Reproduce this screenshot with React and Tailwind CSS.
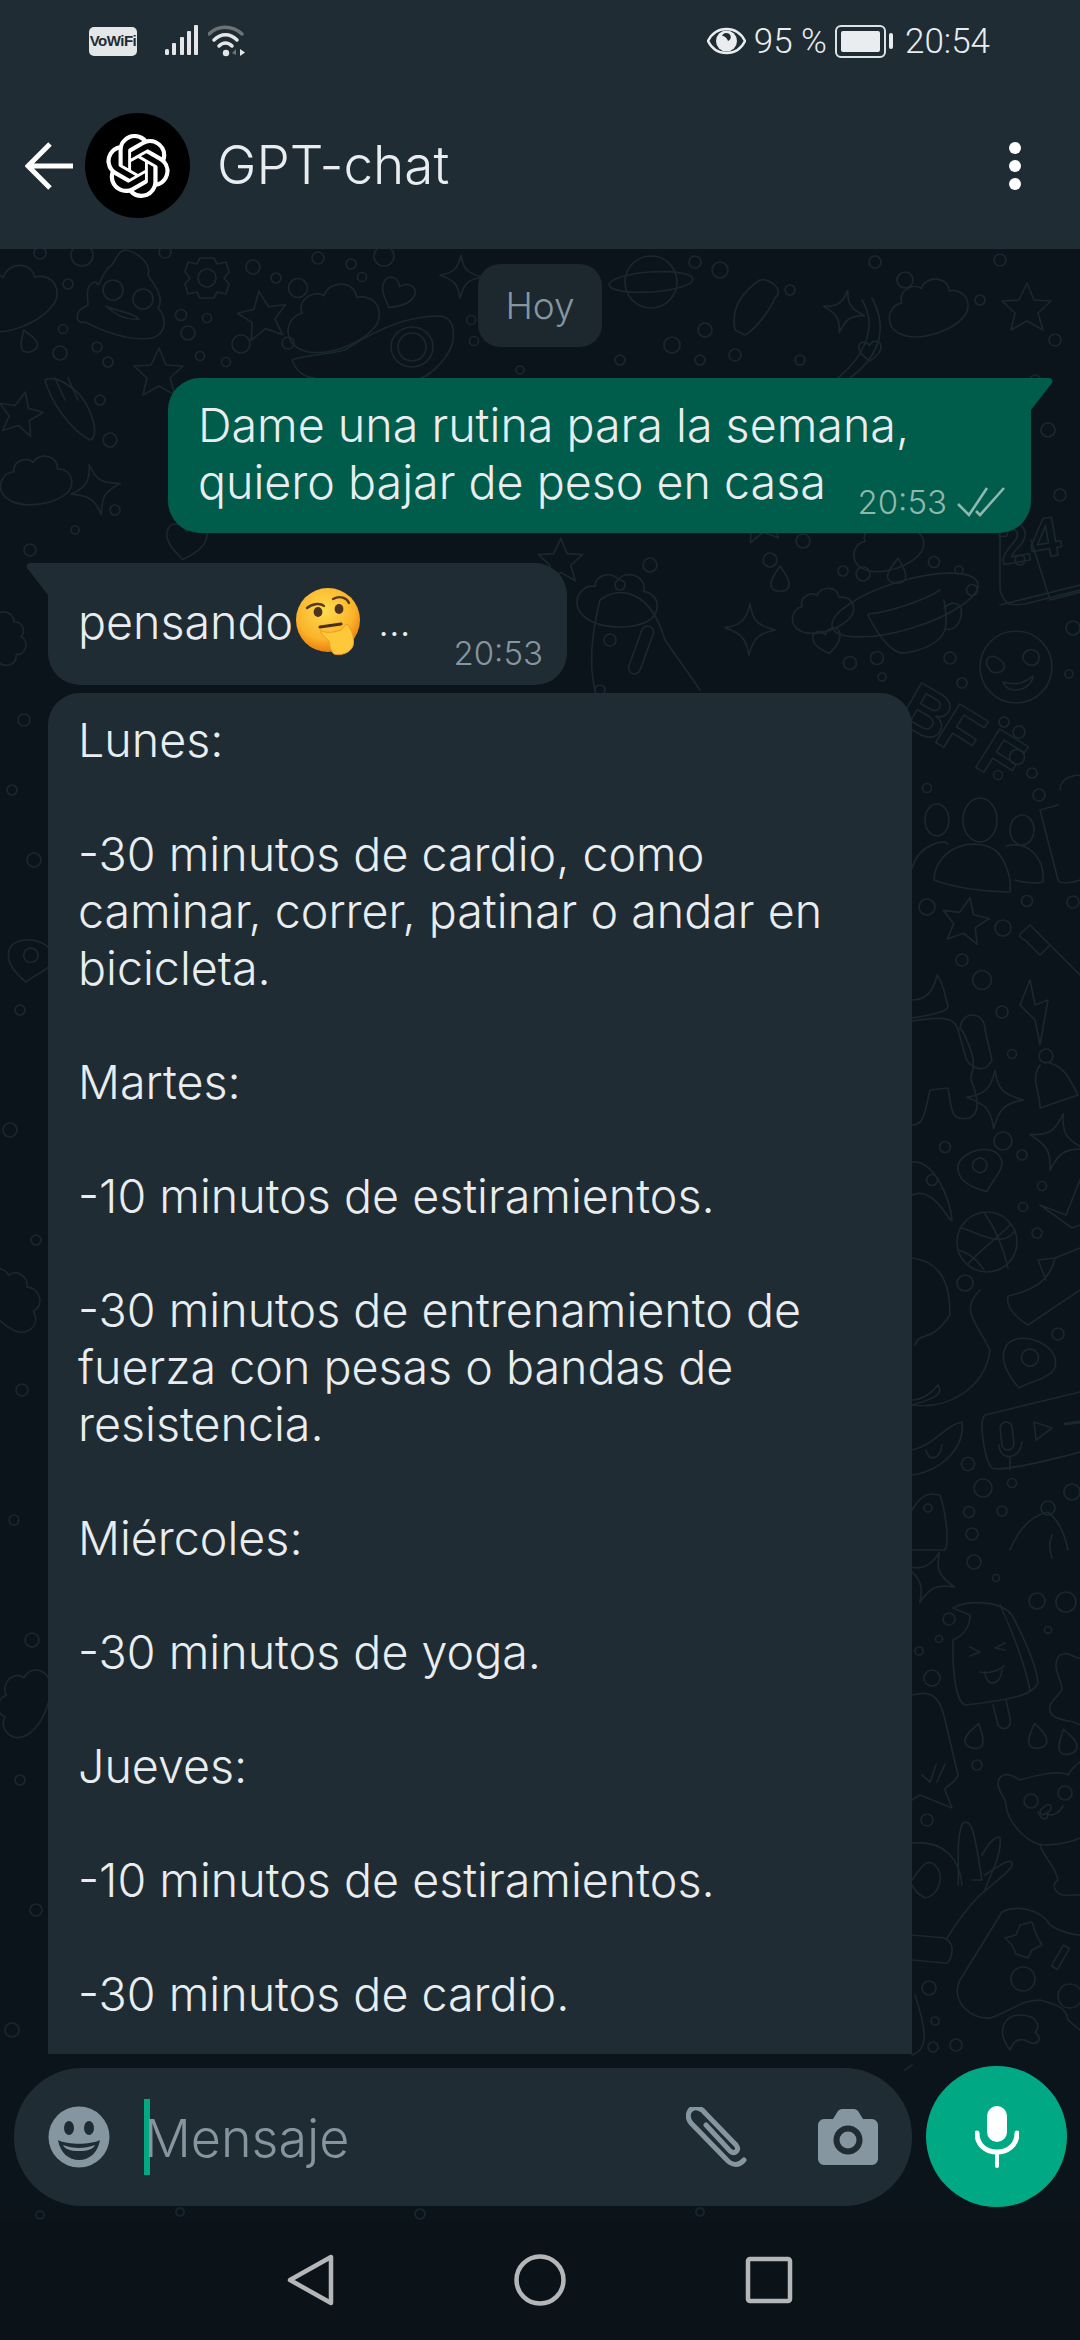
import React from 'react';
import { SiOpenai } from 'react-icons/si';

const dots = [
  [803,541,7],[843,571,5],[863,574,7],[934,562,5.5],[959,570,4],[972,590,5.5],[850,663,6.5],[877,658,6.5],[882,677,4],[950,658,6],[962,683,5],
  [1004,722,5],[1019,732,6],[1017,757,7.5],[998,775,4.5],[1032,773,5],[1039,795,6],[927,788,4.5],[1073,628,7],[1069,674,4],[927,907,8],[1027,901,5.5],
  [1003,928,8],[962,960,6],[982,980,9.5],[1002,1012,6],[1073,902,6],[1012,1054,4.5],[945,1147,5.5],[1003,1141,9],[1022,1155,5],[932,1180,5.5],
  [1042,1186,4.5],[1023,1207,4.5],[1037,1233,5],[965,1283,8],[1058,1334,6],[968,1464,6.5],[983,1488,9],[1012,1483,4.5],[1072,1492,8],[969,1512,5.5],
  [1002,1511,5],[972,1534,6],[974,1562,7],[996,1578,3.5],[1037,1601,8],[1066,1602,10],[1048,1630,3.5],[949,1619,6],[939,1639,3.5],[919,1651,4],
  [932,1678,8],[977,1765,5],[927,1820,6],[1023,1979,12],[1070,1996,12],[929,1988,7],[935,2021,4],[933,2047,5],[956,2045,6],
  [40,253,6],[82,255,11],[165,252,6],[68,284,5],[63,329,4.5],[60,353,7],[97,347,5],[108,362,5],[181,315,5.5],[207,318,4.5],[188,333,7],[200,356,4.5],
  [241,344,9],[226,362,4.5],[253,267,7],[276,278,5],[298,288,9.5],[318,258,6],[351,264,5],[362,277,4.5],[384,256,10],[288,343,6],[471,320,4.5],[474,341,4.5],
  [695,262,6],[720,270,8],[705,330,7],[672,345,8],[700,360,5],[735,355,6],[800,360,5],[790,290,5],[875,262,6],[905,280,8],[1000,260,6],[980,300,5],
  [1055,340,6],[1035,380,5],[1048,430,7],[1060,495,6],[1020,560,5],[560,300,5],[520,370,4],[620,360,5],[100,400,5],[110,440,7],[115,510,5],[30,550,6],
  [75,530,4],[650,565,7],[620,585,5],[770,560,7],[610,640,6],[600,690,5],[24,720,6],[12,790,5],[34,860,7],[20,1010,5],[10,1130,7],[36,1240,5],[22,1390,6],
  [14,1520,5],[32,1640,7],[20,1780,5],[36,1910,6],[12,2030,7],[40,2215,4],[180,2212,4],[420,2214,5],[700,2212,4],
];

const shapes = {
  star4: 'M0 -22C2 -8 6 -4 21 0C6 3 3 7 -1 21C-3 7 -7 3 -21 -2C-8 -4 -3 -8 0 -22Z',
  star5: 'M1 -24L8 -7L25 -6L12 6L17 23L1 14L-15 23L-11 6L-24 -6L-7 -7Z',
  heart: 'M0 22C-14 12 -24 4 -22 -8C-20 -18 -7 -18 -1 -9C4 -20 19 -20 22 -10C24 2 12 14 0 22Z',
  drop: 'M0 -14C6 -5 10 0 9 6C7 13 -7 13 -9 6C-10 0 -5 -6 0 -14Z',
  pin: 'M0 28C-18 18 -29 6 -28 -7C-26 -30 24 -32 28 -7C30 6 10 16 0 28ZM9 -6A9 9 0 1 1 -9 -6A9 9 0 1 1 9 -6Z',
  cloud: 'M-46 14C-50 0 -40 -10 -30 -10C-32 -24 -14 -30 -6 -22C2 -36 26 -30 24 -14C44 -14 48 8 34 18C14 34 -36 38 -46 14Z',
};

const placed = [
  ['star4',995,1100,1.35,0],['star4',1057,1143,1.35,12],['star4',461,277,1,0],['star4',844,312,1,10],['star4',96,490,1.2,-15],['star4',750,630,1.2,0],['star4',930,1578,1.25,20],
  ['star5',262,315,1,-10],['star5',965,920,0.95,10],['star5',158,372,1,0],['star5',20,413,0.9,12],['star5',1026,307,1,0],['star5',560,560,0.9,0],['star5',760,520,0.9,-10],
  ['heart',397,293,0.75,28],['heart',827,640,0.62,-10],['heart',186,540,0.9,10],['heart',870,350,0.5,0],
  ['drop',28,342,0.9,-20],['drop',897,572,1,5],['drop',975,1737,1,15],['drop',1037,1737,1,-10],['drop',1067,1743,1,-15],['drop',780,580,1,0],
  ['pin',981,1170,0.8,-15],['pin',1028,1363,0.95,20],['pin',30,960,0.8,10],
  ['cloud',335,317,1.05,-12],['cloud',15,297,1,-15],['cloud',930,307,0.9,-10],['cloud',38,480,0.8,0],['cloud',824,610,0.7,-10],['cloud',890,545,0.8,-10],['cloud',620,600,0.9,10],
  ['cloud',14,1300,0.8,60],['cloud',24,1700,0.8,-60],['cloud',8,640,0.6,90],
];

const Doodles = () => (
  <svg className="absolute inset-0 w-full h-full" viewBox="0 249 1080 1971" fill="none" stroke="#1a272e" strokeWidth="1.7" strokeLinejoin="round" strokeLinecap="round">
    {dots.map(([x, y, r], i) => <circle key={i} cx={x} cy={y} r={r} />)}
    {placed.map(([name, x, y, s, rot], i) => (
      <path key={i} d={shapes[name]} vectorEffect="non-scaling-stroke" transform={`translate(${x} ${y}) rotate(${rot}) scale(${s})`} />
    ))}
    {/* poop */}
    <path d="M88 305C72 312 76 325 85 322C120 340 140 340 153 338C168 332 166 316 158 308C166 296 150 280 148 275C152 262 134 250 124 250C114 254 118 262 108 268C98 280 100 290 96 282C84 284 88 298 88 305Z" />
    <circle cx="113" cy="290" r="10" /><circle cx="143" cy="299" r="10" /><path d="M106 306C118 318 130 320 139 319C132 312 118 312 106 306Z" />
    {/* gear */}
    <circle cx="207" cy="278" r="9" />
    <path d="M200 258L214 258L217 264L226 262L229 272L224 278L229 284L226 294L217 292L214 298L200 298L197 292L188 294L185 284L190 278L185 272L188 262L197 264Z" />
    {/* avocado */}
    <ellipse cx="412" cy="347" rx="21" ry="20" /><ellipse cx="412" cy="347" rx="14" ry="14" />
    <path d="M345 350C390 320 420 316 440 316C456 318 458 340 445 358C435 370 425 378 420 378M345 350C330 354 300 356 292 360C296 372 306 378 315 378" />
    {/* planet */}
    <circle cx="651" cy="282" r="26" /><ellipse cx="651" cy="282" rx="42" ry="10" transform="rotate(-4 651 282)" />
    {/* hand, banana */}
    <path d="M735 330C730 305 745 290 760 280C770 278 785 290 775 298C770 310 755 330 745 335Z" /><path d="M862 300C880 330 860 360 838 378M872 298C892 335 872 362 850 378" />
    {/* hand left */}
    <path d="M45 380C50 400 70 430 90 440C100 436 92 410 80 395C70 385 55 375 45 380Z" /><path d="M55 378L65 400M68 378L78 400" />
    {/* backpack, coffee */}
    <path d="M600 600C620 585 650 590 665 640L700 690M600 600C590 640 590 670 595 690" /><rect x="635" y="625" width="12" height="50" rx="6" transform="rotate(20 641 650)" />
    <path d="M1031 540L1050 600L1080 592M1000 533L1000 590C1005 606 1010 606 1025 604L1080 590" />
    <path d="M1000 605L1080 585" />
    {/* cup */}
    <ellipse cx="905" cy="605" rx="76" ry="24" transform="rotate(-17 905 605)" />
    <path d="M869 614C890 612 925 600 940 590M868 615C880 640 895 655 905 653C925 650 940 642 945 630C948 615 945 610 944 600" />
    <path d="M944 608C955 598 965 605 960 620C955 632 945 630 945 628" />
    {/* face */}
    <circle cx="1016" cy="667" r="36" />
    <path d="M1000 660C990 650 980 662 992 672C1005 675 1008 664 1000 660ZM1038 653C1030 644 1018 655 1025 662C1030 668 1042 666 1038 653ZM1003 682C1018 686 1026 682 1033 676C1032 690 1008 696 1003 682Z" />
    {/* letters */}
    <g stroke="#1a272e" fontFamily="Liberation Sans, sans-serif" fontWeight="700" fontSize="66">
      <text x="0" y="0" transform="translate(895 720) rotate(30)">B</text>
      <text x="0" y="0" transform="translate(932 740) rotate(32)">F</text>
      <text x="0" y="0" transform="translate(972 765) rotate(32)">F</text>
      <text x="0" y="0" fontSize="56" transform="translate(1002 565) rotate(-10)">24</text>
    </g>
    {/* people */}
    <ellipse cx="980" cy="820" rx="17" ry="22" /><ellipse cx="937" cy="820" rx="12" ry="16" /><ellipse cx="1022" cy="830" rx="12" ry="15" />
    <path d="M934 880C935 850 970 835 995 850C1005 858 1012 878 1010 892C985 892 955 888 934 880ZM912 868C918 845 945 838 948 844M1006 846C1030 840 1045 860 1043 882C1035 884 1020 882 1015 880" />
    {/* popsicle, lightning, hand */}
    <path d="M1060 790C1060 775 1080 775 1080 775M1058 805L1040 810L1058 880C1060 885 1075 882 1080 880" />
    <path d="M1030 980L1020 1005L1035 1020L1040 1045L1048 1000L1035 1005Z" />
    <path d="M1025 940C1015 935 1020 935 1030 925L1050 945L1040 955L1025 940ZM1050 945L1080 975" />
    <path d="M912 1000C930 1000 935 985 937 975C945 985 945 1000 948 1005C950 1012 930 1015 912 1018" />
    <path d="M912 1021C950 1015 955 1020 958 1030M960 1030C960 1010 985 1010 985 1030L992 1060C985 1075 970 1068 966 1058L958 1030" />
    <path d="M912 1125C925 1125 925 1110 930 1090L948 1088C952 1110 950 1122 970 1118C980 1112 978 1100 973 1085C965 1070 985 1075 962 1030" />
    {/* bell */}
    <circle cx="1046" cy="1056" r="7" /><path d="M1040 1065C1030 1080 1040 1090 1040 1108L1078 1095C1070 1080 1065 1065 1045 1062" />
    {/* ball */}
    <circle cx="987" cy="1242" r="30" /><path d="M985 1214C1000 1235 1005 1255 1008 1268M960 1228C975 1230 1000 1250 1014 1232M958 1250C975 1255 980 1265 984 1270M968 1264C975 1255 995 1240 1010 1225" />
    {/* check, shoe */}
    <path d="M1040 1205L1066 1215L1080 1180M1040 1205L1072 1228L1080 1225" />
    <path d="M1038 1260L1055 1258C1050 1280 1035 1290 1008 1296C1005 1310 1020 1320 1028 1325L1080 1290M1038 1260L1046 1280M1055 1258L1080 1248" />
    {/* octopus */}
    <path d="M912 1162C935 1160 950 1200 952 1220C950 1225 935 1185 912 1195M912 1258C945 1262 950 1290 950 1315C930 1345 920 1330 915 1345M980 1290C960 1310 975 1320 990 1350C985 1390 945 1410 912 1405C930 1400 945 1395 938 1385C930 1395 920 1400 912 1400" />
    {/* recording */}
    <path d="M985 1415L1080 1392M985 1415C978 1420 985 1462 992 1468C1000 1472 1050 1460 1080 1452" />
    <rect x="1001" y="1422" width="12" height="28" rx="6" transform="rotate(-6 1007 1436)" /><path d="M999 1445C1000 1462 1020 1460 1022 1442M1010 1458V1470M1034 1422L1052 1428L1036 1440Z" /><path d="M1065 1424L1080 1422" strokeWidth="3" />
    {/* bird */}
    <path d="M912 1475C945 1470 965 1445 962 1422C945 1425 935 1445 912 1450M926 1450C928 1462 940 1460 942 1445" />
    <path d="M912 1510C925 1488 935 1495 940 1495C945 1510 950 1540 945 1550L912 1550" />
    <circle cx="928" cy="1508" r="4" />
    <path d="M1010 1550C1020 1525 1035 1515 1048 1512C1058 1520 1065 1535 1068 1550M1052 1535C1048 1545 1050 1552 1052 1558" /><circle cx="1048" cy="1508" r="7" />
    {/* ice pop */}
    <path d="M953 1608C968 1600 1000 1600 1012 1615C1025 1640 1036 1665 1038 1682C1035 1695 1010 1700 965 1705C958 1703 952 1680 953 1640C965 1635 970 1625 970 1615Z" />
    <path d="M1000 1605C1012 1630 1025 1665 1030 1690M970 1647L980 1652L970 1656M1005 1643L995 1648L1005 1650M980 1672C990 1674 1000 1670 1004 1666M985 1672C985 1686 1000 1688 1002 1670M993 1705L998 1725C1003 1732 1012 1728 1010 1718L1006 1700" />
    {/* fox */}
    <path d="M912 1695C930 1690 940 1695 945 1720L958 1775C955 1785 945 1785 945 1790L952 1808L920 1795L912 1800" /><path d="M922 1775L930 1782L936 1765M937 1782L945 1764" />
    {/* cat */}
    <path d="M1020 1780C1005 1770 998 1775 998 1785C1000 1795 1006 1798 1006 1805C1008 1825 1030 1845 1045 1845C1065 1845 1080 1838 1080 1838M1020 1780C1035 1775 1060 1770 1068 1775C1072 1768 1080 1762 1080 1762" />
    <circle cx="1031" cy="1801" r="7" /><circle cx="1065" cy="1793" r="7" /><path d="M1043 1808C1050 1800 1055 1808 1047 1813C1040 1818 1038 1810 1043 1808ZM1038 1812C1042 1822 1050 1820 1047 1813C1052 1818 1060 1812 1063 1806M1040 1845C1045 1860 1055 1865 1058 1880C1050 1885 1055 1897 1070 1895L1080 1895" />
    <path d="M1060 1655C1070 1650 1075 1660 1080 1658M1060 1655C1050 1665 1062 1680 1062 1690C1055 1700 1045 1705 1052 1715C1060 1722 1075 1720 1080 1725" />
    {/* plant */}
    <path d="M958 1885C960 1870 955 1845 962 1824C972 1815 975 1840 978 1855L982 1880L972 1880M982 1855C990 1840 998 1835 1000 1838C1002 1855 990 1875 985 1890M985 1875C1000 1865 1010 1858 1012 1863C1014 1868 1000 1878 980 1895C965 1910 955 1925 946 1940M912 1843C945 1840 960 1860 962 1885M912 1880C925 1860 930 1860 935 1865C945 1875 940 1895 925 1898C920 1895 915 1892 912 1885M912 1935L945 1938C958 1945 950 1965 945 1963L912 1960" />
    {/* controller */}
    <path d="M1002 1912C1015 1905 1040 1908 1050 1925C1060 1932 1075 1935 1080 1935M1002 1912L960 1980C950 2000 970 2020 990 2018C1010 2012 1020 2000 1040 2000C1055 2005 1065 2005 1068 2020L1080 2030" />
    <path d="M1020 1925L1032 1922L1036 1934L1042 1945L1032 1950L1028 1958L1016 1954L1012 1945L1005 1938L1016 1935Z" /><rect x="1057" y="1945" width="7" height="24" transform="rotate(30 1060 1957)" />
    <path d="M1010 2050C995 2030 1005 2015 1020 2015C1040 2015 1040 2030 1035 2032C1045 2040 1035 2048 1025 2040C1015 2038 1012 2045 1010 2050Z" />
    <path d="M912 2065L905 2070M915 1995C930 2040 925 2050 912 2055" />
  </svg>
);

const ThinkingEmoji = () => (
  <svg width="68" height="68" viewBox="0 0 68 68">
    <defs>
      <radialGradient id="faceGrad" cx="45%" cy="35%" r="65%">
        <stop offset="0%" stopColor="#ffdb4f" />
        <stop offset="70%" stopColor="#fbb32a" />
        <stop offset="100%" stopColor="#ea7f10" />
      </radialGradient>
    </defs>
    <circle cx="34" cy="32" r="32" fill="url(#faceGrad)" />
    <path d="M13 20C19 15 27 15 30 18" stroke="#5a3a1e" strokeWidth="2.4" fill="none" strokeLinecap="round" />
    <path d="M39 11C46 7 53 10 55 15" stroke="#5a3a1e" strokeWidth="2.4" fill="none" strokeLinecap="round" />
    <ellipse cx="24" cy="24" rx="4.4" ry="5" fill="#4d3420" />
    <ellipse cx="45" cy="21" rx="4.4" ry="5" fill="#4d3420" />
    <path d="M26 39L47 36" stroke="#4a2e1a" strokeWidth="3" strokeLinecap="round" />
    <path d="M26 42C31 46 42 44 47 42C49 40 51 37 53 36C57 40 61 50 59 58C56 65 47 68 40 66C36 62 36 58 35 53C31 50 27 46 26 42Z" fill="#fdc93a" stroke="#ef9a1d" strokeWidth="1" />
  </svg>
);

const longMessage = [
  'Lunes:', '', '-30 minutos de cardio, como', 'caminar, correr, patinar o andar en', 'bicicleta.', '', 'Martes:', '',
  '-10 minutos de estiramientos.', '', '-30 minutos de entrenamiento de', 'fuerza con pesas o bandas de', 'resistencia.', '',
  'Miércoles:', '', '-30 minutos de yoga.', '', 'Jueves:', '', '-10 minutos de estiramientos.', '', '-30 minutos de cardio.',
];

const StatusBar = () => (
  <div className="h-[82px] flex items-center justify-between pl-[89px] pr-[90px] text-[#e9edef]">
    <div className="flex items-center">
      <div className="w-[48px] h-[29px] rounded-[5px] bg-[#e4e6e8] text-[#202c33] text-[15px] font-bold tracking-[-0.5px] flex items-center justify-center font-['Liberation_Sans',sans-serif]">VoWiFi</div>
      <svg className="ml-[28px]" width="34" height="32" viewBox="0 0 34 32" fill="#e4e6e8">
        <rect x="0" y="24" width="4" height="6" rx="1.5" /><rect x="7" y="18" width="4" height="12" rx="1" /><rect x="15" y="12" width="4" height="18" rx="1" /><rect x="22" y="6" width="4" height="24" rx="1" /><rect x="29" y="0" width="4" height="30" rx="1" />
      </svg>
      <svg className="ml-[9px]" width="38" height="32" viewBox="0 0 38 32" fill="none" strokeLinecap="round">
        <path d="M1 9C10 0 24 0 34 9" stroke="#6b7377" strokeWidth="3.5" />
        <path d="M6 15C13 8 22 8 29 15" stroke="#e4e6e8" strokeWidth="3.5" />
        <path d="M11 21C15 17 20 17 24 21" stroke="#e4e6e8" strokeWidth="3.5" />
        <circle cx="18" cy="28" r="3.2" fill="#e4e6e8" />
        <path d="M32 24V31L37 27.5Z" fill="#e4e6e8" /><path d="M28 24V30L24 28Z" fill="#6b7377" />
      </svg>
    </div>
    <div className="flex items-center font-['Roboto'] font-light text-[35px] leading-none">
      <svg width="39" height="28" viewBox="0 0 39 28">
        <path d="M1 14C9 -2 30 -2 38 14C30 30 9 30 1 14Z" fill="none" stroke="#e9edef" strokeWidth="2.4" />
        <circle cx="19.5" cy="14" r="10.5" fill="#e9edef" />
        <path d="M19 6C25 6 25 13 21 14C20 11 18 9 15 9C16 7 17 6 19 6Z" fill="#202c33" />
      </svg>
      <span className="ml-[8px]">95 %</span>
      <div className="ml-[8px] w-[51px] h-[33px] rounded-[6px] border-2 border-[#dfe2e4] p-[4px]">
        <div className="h-full rounded-[2px] bg-[#e9edef]" />
      </div>
      <div className="ml-[3px] w-[4px] h-[16px] rounded-[2px] bg-[#e9edef]" />
      <span className="ml-[12px]">20:54</span>
    </div>
  </div>
);

const ChatHeader = () => (
  <div className="h-[167px] flex items-center pl-[25px] pr-[59px]">
    <svg width="48" height="48" viewBox="0 0 48 48" fill="none" stroke="#fff" strokeWidth="5" strokeLinejoin="miter">
      <path d="M48 24H4M25 2L3 24L25 46" />
    </svg>
    <div className="ml-[12px] w-[105px] h-[105px] rounded-full bg-black flex items-center justify-center text-white">
      <SiOpenai size={64} />
    </div>
    <div className="ml-[27px] text-[53px] text-[#e9edef]">GPT-chat</div>
    <div className="ml-auto flex flex-col gap-[6px]">
      <div className="w-[12px] h-[12px] rounded-full bg-white" />
      <div className="w-[12px] h-[12px] rounded-full bg-white" />
      <div className="w-[12px] h-[12px] rounded-full bg-white" />
    </div>
  </div>
);

const InputBar = () => (
  <div className="mt-[12px] flex items-center pl-[14px] pr-[13px] pb-[13px]">
    <div className="w-[898px] h-[138px] rounded-[68px] bg-[#202c33] flex items-center pl-[34px] pr-[34px] relative">
      <svg width="62" height="62" viewBox="0 0 62 62">
        <circle cx="31" cy="31" r="30.5" fill="#8696a0" />
        <ellipse cx="21" cy="22" rx="5" ry="7" fill="#202c33" />
        <ellipse cx="41" cy="22" rx="5" ry="7" fill="#202c33" />
        <path d="M10 34C20 39 42 39 52 34C50 47 41 54 31 54C21 54 12 47 10 34Z" fill="#202c33" />
        <path d="M15 39C25 43 37 43 47 39C45 43 40 45 31 45C22 45 17 43 15 39Z" fill="#8696a0" />
      </svg>
      <div className="ml-[34px] w-[6px] h-[76px] bg-[#00a884]" />
      <div className="ml-[-6px] mt-[4px] text-[52px] text-[#8696a0]">Mensaje</div>
      <svg className="ml-auto" width="64" height="60" viewBox="0 0 64 60" fill="none" stroke="#8696a0" strokeWidth="5" strokeLinecap="round">
        <path d="M58 53C52 60 45 58 40 52L5 16C-1 8 4 -1 12 1C16 2 18 4 20 7L50 38C54 43 49 48 44 44L20 18" />
      </svg>
      <svg className="ml-[68px]" width="60" height="56" viewBox="0 0 60 56">
        <path d="M6 10H15L20 2C21 1 22 0 24 0H36C38 0 39 1 40 2L45 10H54C57 10 60 13 60 16V50C60 53 57 56 54 56H6C3 56 0 53 0 50V16C0 13 3 10 6 10Z" fill="#8696a0" />
        <circle cx="30" cy="31" r="11.5" fill="none" stroke="#202c33" strokeWidth="6" />
      </svg>
    </div>
    <div className="ml-auto w-[141px] h-[141px] rounded-full bg-[#00a884] flex items-center justify-center">
      <svg width="44" height="62" viewBox="0 0 44 62" fill="#fff">
        <rect x="12" y="0" width="20" height="36" rx="10" />
        <path d="M2 27C2 40 12 46 22 46C32 46 42 40 42 27" fill="none" stroke="#fff" strokeWidth="5" strokeLinecap="round" />
        <rect x="20" y="44" width="4" height="18" rx="2" />
      </svg>
    </div>
  </div>
);

export default function App() {
  return (
    <div className="w-[1080px] h-[2340px] flex flex-col bg-[#0b1319] overflow-hidden font-['Inter',sans-serif] font-[350]">
      <div className="bg-[#202c33]">
        <StatusBar />
        <ChatHeader />
      </div>

      <div className="relative h-[1971px] bg-[#0a141a] flex flex-col">
        <Doodles />

        <div className="relative mt-[15px] mx-auto w-[124px] h-[83px] rounded-[22px] bg-[#1c272e] flex items-center justify-center text-[37px] text-[#8696a0]">Hoy</div>

        <div className="relative mt-[31px] ml-[168px] w-[863px] h-[155px] rounded-[32px] rounded-tr-none bg-[#005c4b] pl-[30px] pr-[26px] pt-[19px] text-[46.6px] leading-[57px] text-[#e9edef]">
          <svg className="absolute top-0 right-[-22px]" width="22" height="32" viewBox="0 0 22 32"><path d="M0 0H18C21 0 22 3 21 5L0 32Z" fill="#005c4b" /></svg>
          <div className="whitespace-nowrap">Dame una rutina para la semana,</div>
          <div className="flex items-start justify-between whitespace-nowrap">
            <span>quiero bajar de peso en casa</span>
            <span className="mt-[23px] flex items-center gap-[10px] text-[33px] leading-[50px] text-[#8fb8ae]">
              20:53
              <svg width="48" height="32" viewBox="0 0 48 32" fill="none" stroke="#8fb8ae" strokeWidth="2.6"><path d="M1 18L12 29L30 2M19 25L23 29L47 2" /></svg>
            </span>
          </div>
        </div>

        <div className="relative mt-[30px] ml-[48px] w-[519px] h-[122px] rounded-[32px] rounded-tl-none bg-[#202c33] pl-[30px] pr-[24px] pt-[20px] text-[46.6px] leading-[57px] text-[#e9edef]">
          <svg className="absolute top-0 left-[-22px]" width="22" height="32" viewBox="0 0 22 32"><path d="M22 0H4C1 0 0 3 1 5L22 32Z" fill="#202c33" /></svg>
          <div className="flex h-[78px] items-center whitespace-nowrap">
            <span>pensando</span>
            <span className="ml-[1px]"><ThinkingEmoji /></span>
            <span className="ml-[16px] text-[38px]">...</span>
            <span className="ml-auto self-start mt-[50px] text-[33px] leading-[40px] text-[#8696a0]">20:53</span>
          </div>
        </div>

        <div className="relative mt-[8px] ml-[48px] w-[864px] flex-1 min-h-0 overflow-hidden rounded-t-[32px] bg-[#202c33] pl-[30px] pr-[30px] pt-[19px] text-[46.6px] leading-[57px] text-[#e9edef]">
          {longMessage.map((line, i) => (
            <div key={i} className="h-[57px] whitespace-nowrap">{line}</div>
          ))}
        </div>

        <div className="relative">
          <InputBar />
        </div>
      </div>

      <div className="flex-1 flex items-center justify-center">
        <svg width="506" height="52" viewBox="0 0 506 52" fill="none" stroke="#b4b6b8" strokeWidth="4.5" strokeLinejoin="round">
          <path d="M44 3V49L3 26Z" />
          <circle cx="253" cy="26" r="23.5" />
          <rect x="461" y="5" width="42" height="42" rx="2" />
        </svg>
      </div>
    </div>
  );
}
